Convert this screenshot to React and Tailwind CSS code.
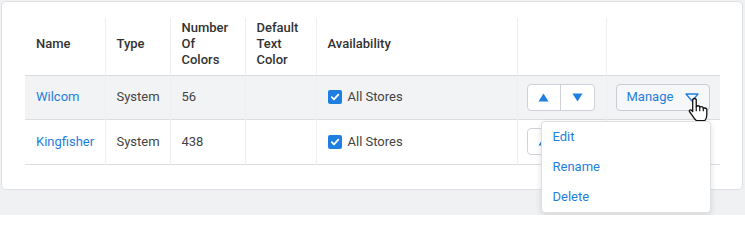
import React from "react";

const font = { fontFamily: "Roboto, 'Noto Sans', sans-serif" };

function Check() {
  return (
    <span className="inline-flex h-[14px] w-[14px] items-center justify-center rounded-[2px] bg-[#1f7fe0]">
      <svg width="10" height="10" viewBox="0 0 10 10">
        <path d="M1.8 5.2 L4 7.3 L8.3 2.6" fill="none" stroke="white" strokeWidth="1.8" strokeLinecap="round" strokeLinejoin="round" />
      </svg>
    </span>
  );
}

function UpDown() {
  return (
    <div className="flex h-[27px] w-[68px] rounded-[4px] border border-[#cfd2d8] bg-white">
      <div className="flex flex-1 items-center justify-center border-r border-[#cfd2d8]">
        <svg width="11" height="9" viewBox="0 0 11 9"><path d="M5.5 0.5 L10.5 8.5 L0.5 8.5 Z" fill="#1f7fe0" /></svg>
      </div>
      <div className="flex flex-1 items-center justify-center">
        <svg width="11" height="9" viewBox="0 0 11 9"><path d="M0.5 0.5 L10.5 0.5 L5.5 8.5 Z" fill="#1f7fe0" /></svg>
      </div>
    </div>
  );
}

function Hand() {
  return (
    <svg width="20" height="25" viewBox="0 0 17 21" className="absolute left-[72px] top-[13px]">
      <path
        d="M4 2 Q5.5 0.3 7 2 L7 8 Q8.5 6.6 10 8 L10 8.6 Q11.5 7.4 13 9 L13 9.6 Q14.6 8.6 16 10.2 L16 15 Q16 18 14.3 20 L7.2 20 Q5.3 18.2 3.4 15.2 L1.2 12.2 Q0.8 10.6 2.6 10.9 L4 12.2 Z"
        fill="white"
        stroke="#111"
        strokeWidth="1.1"
        strokeLinejoin="round"
      />
      <path d="M7 8 L7 12 M10 8.6 L10 12 M13 9.6 L13 12" stroke="#111" strokeWidth="1" fill="none" />
    </svg>
  );
}

function Manage() {
  return (
    <div className="relative">
      <div className="flex h-[27px] w-[94px] items-center rounded-[4px] border border-[#c9ccd3] bg-[#f6f7f9] pl-[10px] text-[13px] text-[#1f7fe0]">
        <span>Manage</span>
        <svg width="14" height="9" viewBox="0 0 14 9" className="ml-[12px]">
          <path d="M1 1 L13 1 L7 8 Z" fill="none" stroke="#1f7fe0" strokeWidth="1.3" strokeLinejoin="round" />
        </svg>
      </div>
      <Hand />
      <div className="absolute left-[-75px] top-[37px] z-10 w-[170px] rounded-[4px] border border-[#dcdfe3] bg-white text-[13px] text-[#1f7fe0] shadow-[0_2px_6px_rgba(0,0,0,0.12)]">
        <div className="flex h-[30px] items-center pl-[11px]">Edit</div>
        <div className="flex h-[30px] items-center pl-[11px]">Rename</div>
        <div className="flex h-[30px] items-center pl-[11px]">Delete</div>
      </div>
    </div>
  );
}

export default function App() {
  const th = "border-r border-[#eeeff1] pl-[11px] pr-[11px] pt-0 pb-[5px] text-left align-middle font-medium";
  const td = "border-r border-[#eeeff1] pl-[11px] align-middle";
  const tdBtn = "border-r border-[#eeeff1] pl-[9px] align-middle";
  return (
    <div className="h-[215px] w-[745px] bg-[#f0f1f3] pl-[1px] pt-[1px]" style={font}>
      <div className="h-[189px] w-[742px] rounded-[5px] border border-[#dfe1e5] bg-white pl-[23px] pt-[16px]">
        <table className="w-[695px] table-fixed border-collapse text-[13px] leading-[16px]">
          <colgroup>
            <col className="w-[80px]" />
            <col className="w-[65px]" />
            <col className="w-[75px]" />
            <col className="w-[71px]" />
            <col className="w-[201px]" />
            <col className="w-[89px]" />
            <col className="w-[114px]" />
          </colgroup>
          <thead>
            <tr className="h-[57px] border-b border-[#d8dadd] text-[#333]">
              <th className={th}>Name</th>
              <th className={th}>Type</th>
              <th className={th}>Number Of Colors</th>
              <th className={th}>Default Text Color</th>
              <th className={th}>Availability</th>
              <th className={th}></th>
              <th className="pl-[11px]"></th>
            </tr>
          </thead>
          <tbody className="text-[#444]">
            <tr className="h-[44px] border-b border-[#dcdde0] bg-[#f2f3f5]">
              <td className={td + " text-[#1f7fe0]"}>Wilcom</td>
              <td className={td}>System</td>
              <td className={td}>56</td>
              <td className={td}></td>
              <td className={td}>
                <div className="flex items-center gap-[6px]"><Check /><span>All Stores</span></div>
              </td>
              <td className={tdBtn}><UpDown /></td>
              <td className="pl-[9px] align-middle"><Manage /></td>
            </tr>
            <tr className="h-[45px] border-b border-[#dcdde0]">
              <td className={td + " text-[#1f7fe0]"}>Kingfisher</td>
              <td className={td}>System</td>
              <td className={td}>438</td>
              <td className={td}></td>
              <td className={td}>
                <div className="flex items-center gap-[6px]"><Check /><span>All Stores</span></div>
              </td>
              <td className={tdBtn}><UpDown /></td>
              <td className="pl-[9px] align-middle"></td>
            </tr>
          </tbody>
        </table>
      </div>
    </div>
  );
}
